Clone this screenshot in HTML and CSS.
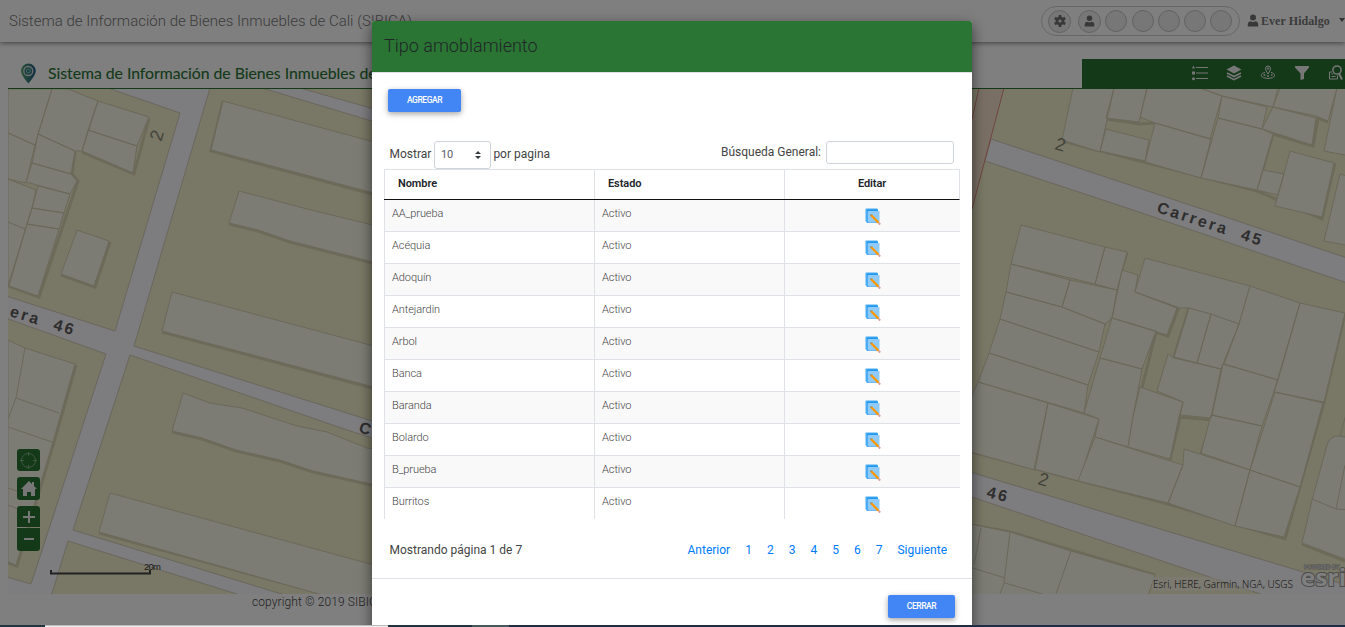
FILE: index.html
```html
<!DOCTYPE html>
<html lang="es">
<head>
<meta charset="utf-8">
<title>SIBICA</title>
<link rel="stylesheet" href="styles.css">
</head>
<body>
<svg class="defs" aria-hidden="true">
  <symbol id="edit" viewBox="0 0 16 17">
    <path d="M1 .500h11.500V15H2L.500 13V1z" fill="#4babf5"/><path d="M2.500 1.500H13V4H2.500z" fill="#2196f3"/><path d="M3 3h11.500v11.500H4L3 13.500z" fill="#90caf9"/>
    <path d="M6 7 13.500 14.800" stroke="#ff9800" stroke-width="2.300"/><path d="M5.500 6.500l1 1" stroke="#8b8d70" stroke-width="1.500"/><path d="M13.700 15 15.200 16.500" stroke="#d99b9b" stroke-width="2"/>
  </symbol>
  <symbol id="user" viewBox="0 0 12 12"><circle cx="6" cy="3" r="3"/><path d="M.8 12Q.3 7 3.3 6.7Q6 8.2 8.7 6.7Q11.7 7 11.2 12z"/></symbol>
</svg>

<div class="page">
  <header class="topbar">
    <div class="brand">Sistema de Información de Bienes Inmuebles de Cali (SIBICA)</div>
    <div class="account">
      <div class="pill">
        <span class="dot first"><svg width="12" height="12" viewBox="-6 -6 12 12"><circle r="3" fill="none" stroke="#717171" stroke-width="2.8"/><path d="M0-6V-3M0 3V6M-5.2-3-2.6-1.5M2.6 1.5 5.2 3M-5.2 3-2.6 1.5M2.6-1.5 5.2-3" stroke="#717171" stroke-width="2.7"/></svg></span>
        <span class="dot second"><svg width="11" height="12" fill="#717171"><use href="#user"/></svg></span>
        <span class="dot"></span><span class="dot"></span><span class="dot"></span><span class="dot"></span><span class="dot"></span>
      </div>
      <svg class="usericon" width="12" height="13" fill="#707070"><use href="#user"/></svg>
      <span class="username">Ever Hidalgo</span><span class="caret"></span>
    </div>
  </header>

  <section class="appbar">
    <svg class="pin" width="17" height="21" viewBox="0 0 17 21"><defs><linearGradient id="pg"><stop offset="0" stop-color="#55a66d"/><stop offset="1" stop-color="#205a8a"/></linearGradient></defs><path d="M8.3 20.5Q1 12 1 8a7.4 7.4 0 0 1 14.8 0Q15.800 12 8.300 20.500z" fill="url(#pg)"/><circle cx="8.300" cy="8" r="4.500" fill="#327f7e" stroke="#ddd" stroke-width="1.300"/><circle cx="8.300" cy="8" r="2" fill="none" stroke="#9cc"/></svg>
    <h1 class="apptitle">Sistema de Información de Bienes Inmuebles de Cali</h1>
    <nav class="tools">
      <svg width="16" height="16" viewBox="0 0 16 16"><path d="M4 2.500H16M4 8H16M4 13.500H16" stroke="#eee" stroke-width="1.200"/><path d="M0 3.500 1.500.500 3 3.500zM0 6.500h3v3H0z" fill="#eee"/><circle cx="1.500" cy="13.800" r="1.500" fill="#eee"/></svg>
      <svg width="16" height="16" viewBox="0 0 16 16"><path d="M8 .500 15.500 4.500 8 8.500.500 4.500z" fill="#eee"/><path d="M1 8 8 11.500 15 8M1 11 8 14.700 15 11" fill="none" stroke="#eee" stroke-width="1.600"/></svg>
      <svg width="16" height="16" viewBox="0 0 16 16" fill="none" stroke="#eee"><path d="M5 7.500C0 8 0 12.500 5 13Q8 14 11 13C16 12.500 15.500 8 11 7.500"/><path d="M8 9Q5.500 5.500 5.500 3.500a2.500 2.500 0 0 1 5 0Q10.500 5.500 8 9z"/><circle cx="8" cy="3.500" r=".8"/><path d="M3.500 10h2M7 11h2M11 10h1.500" stroke-width="1.300"/></svg>
      <svg width="16" height="16" viewBox="0 0 16 16"><path d="M1 1H15V2.500L10 8.500V14L6.500 15V8.500L1 2.500z" fill="#eee"/></svg>
      <svg width="16" height="16" viewBox="0 0 16 16" fill="none" stroke="#eee"><circle cx="9" cy="5" r="4.100" stroke-width="1.500"/><path d="M11 8.500 14 14.500" stroke-width="2"/><path d="M4 7H1.500V14H9.500V10.500M3.500 9H5M3.500 11.500H7.500"/></svg>
    </nav>
  </section>

  <main class="mapbox">
    <svg class="map" viewBox="8 89 1337 505" preserveAspectRatio="none">
      <rect x="8" y="89" width="1337" height="505" fill="#f3eecb"/>
      <g fill="#fbf9fc" stroke="#d3cdbb" stroke-width="1">
        <path d="M108 88 180 113 115 331 0 294V316L106 354 31 584 0 575V600H50L68 541 243 596H288L73 530 130 355 347 430 385 442V425L134 346 210 88zM262 88 385 125V112L300 88z"/>
        <path d="M991 139 1205 210 1350 259V284L1133 210 985 161z"/>
        <path d="M960 469 1350 586V600H1278L960 493z"/>
      </g>
      <path d="M979 88H1004L972 209V119z" fill="#f2dfcb"/><path d="M1004 88 972 209M979 88 972 119" stroke="#df897a" fill="none"/>
      <g class="shade">
        <path d="M149 118 134 174 82 152M75 152 72 174 78 181 39 297 8 286M110 242 95 287 61 275M76 365 54 442 17 566 8 563M223 101 211 151 372 194M229 224 258 231 290 242 372 263M162 332 372 388M172 432 202 439 236 451 280 461 313 472 372 485M99 533 327 595"/>
        <path d="M1062 141 1257 191 1322 219 1335 163M1106 119 1140 124 1155 123M1273 134 1257 190M1273 134 1313 146 1318 118 1328 122M1127 252 1122 270M1135 292 1178 309 1168 336 1156 332 1142 388M1189 308 1174 357M1345 313 1324 402 1285 539 1168 504 972 452M1179 417 1212 420 1201 454M1180 418 1170 460M1302 544 1345 561M972 525 1010 532 1155 575"/>
      </g>
      <g class="lots">
        <path d="M8 89H52L38 134 35 145 8 133zM52 89H68L98 101 82 151H75L38 134zM98 101 149 117 137 146 88 130zM88 130 137 146 133 173 82 151zM38 134 75 151 71 174 32 163zM8 133 35 145 26 183 8 179zM32 163 71 174 77 181 70 194 26 182zM38 186 70 194 64 213 32 208zM8 179 36 190 32 208 8 286zM32 208 64 213 59 229 27 224zM27 224 59 229 38 296 9 286zM8 222 25 229M77 230 109 241 94 286 61 274z"/>
        <path d="M8 340 25 348 75 364 53 442 16 565 8 562zM25 348 16 398 8 419M16 398 59 413M8 427 52 442M8 488 20 492M8 505 18 509M223 101 385 145V196L211 150zM239 191 311 210 385 228V265L290 241 258 230 229 223zM172 292 385 349V390L162 331zM183 393 210 403 242 408 297 426 327 432 367 448 385 450V487L313 471 280 460 236 450 202 438 172 431zM110 493 385 568V600H340L99 532z"/>
        <path d="M1073 88 1062 140 1100 152 1114 88zM1114 88H1147L1139 122 1106 118zM1147 88H1200L1222 96 1210 139 1155 123 1140 117zM1106 129 1149 140 1145 161 1100 151zM1155 123 1211 139 1201 178 1145 162zM1200 88H1280L1273 107 1222 96zM1222 96 1267 107 1262 129 1218 118zM1218 118 1262 129 1273 134 1257 190 1201 178zM1273 107 1316 118 1312 145 1262 129zM1278 88H1337L1328 121 1316 116 1273 107zM1263 170 1284 174 1278 195 1257 190zM1290 151 1334 163 1322 217 1275 206zM1337 88H1350V156L1324 151zM1340 174 1350 177V246L1324 241z"/>
        <path d="M1021 225 1105 247 1095 284 1011 264zM1105 247 1127 252 1117 290 1095 284zM1011 264 1070 280 1062 307 1006 292zM1070 280 1117 290 1112 318 1105 324 1062 307zM1006 292 1062 307 1105 324 1099 352 1000 319zM1000 319 1099 352 1088 385 989 353zM989 353 1088 385 1084 413 978 382zM978 382 1048 403 1035 470 960 449 972 395zM1048 403 1099 419 1079 481 1034 469zM1122 270 1138 275 1135 292 1177 308 1167 335 1112 318zM1145 258 1250 286 1239 324 1189 308H1180L1135 292zM1112 318 1156 331 1142 369 1100 358zM1100 358 1142 369 1133 417 1128 447 1095 437 1099 419 1084 413z"/>
        <path d="M1189 308 1211 314 1197 363 1174 357zM1211 314 1239 324 1221 369 1197 363zM1250 286 1300 303 1278 380 1224 364 1239 324zM1300 303 1345 313 1324 402 1274 392zM1168 354 1174 358 1221 369 1211 418 1180 415 1183 402 1157 391zM1223 364 1278 380 1262 426 1212 415zM1140 387 1183 402 1179 417 1170 459 1128 447 1133 417zM1095 437 1183 465 1168 503 1078 481zM1184 449 1250 470 1235 526 1168 503 1183 465zM1211 415 1262 426 1250 470 1201 453zM1275 392 1323 403 1300 487 1250 470zM1250 470 1300 487 1284 537 1235 526zM1340 436Q1330 435 1327 445L1312 500 1302 543 1350 561V438zM1312 499 1336 509 1350 510M1340 436 1350 400M1336 509 1345 465M960 522 1010 532 1071 551 1155 575 1148 596H960zM981 528 974 565M1010 532 1004 583 1000 594M960 564 1005 578M1005 583 1042 594M1071 551 1056 594"/>
      </g>
      <g class="street">
        <text transform="translate(9 316) rotate(17)">era&#160; 46</text>
        <text transform="translate(358 432) rotate(17)">Carrera</text>
        <text transform="translate(1156 212) rotate(18)">Carrera&#160; 45</text>
        <text transform="translate(986 497) rotate(14)">46</text>
        <text transform="translate(962 491) rotate(14)">a</text>
      </g>
      <g class="num"><text transform="translate(161 142) rotate(-72)">2</text><text transform="translate(1054 149) rotate(16)">2</text><text transform="translate(1037 484) rotate(16)">2</text></g>
      <path d="M51 570V573.500H150V570" fill="none" stroke="#444" stroke-width="2"/>
      <text x="144" y="570" class="scale" textLength="17">20m</text>
      <rect x="1152" y="577" width="143" height="14" fill="#fff" opacity=".4"/>
      <text x="1153" y="588" class="credit" textLength="140">Esri, HERE, Garmin, NGA, USGS</text>
      <text x="1304" y="569" class="powered" textLength="35">POWERED BY</text>
      <text x="1301" y="586" class="esri" textLength="45">esri</text>
    </svg>
    <div class="controls">
      <span class="ctl locate"><svg width="17" height="17" viewBox="0 0 17 17" fill="none" stroke="#7fae83"><circle cx="8.500" cy="8.500" r="7"/><path d="M8.500 0V4M8.500 13V17M0 8.500H4M13 8.500H17"/></svg></span>
      <span class="ctl home"><svg width="16" height="15" viewBox="0 0 16 15"><path d="M0 8 8 0 11 3V1H13V5L16 8H14V15H10V11H6V15H2V8z" fill="#eee"/></svg></span>
      <span class="ctl plus"><svg width="12" height="12"><path d="M0 6H12M6 0V12" stroke="#eee" stroke-width="2"/></svg></span>
      <span class="ctl minus"><svg width="10" height="12"><path d="M0 5H10" stroke="#eee" stroke-width="2"/></svg></span>
    </div>
  </main>
  <footer class="copy">copyright © 2019 SIBICA</footer>
</div>

<div class="backdrop">
  <div class="modal">
    <div class="modal-head">Tipo amoblamiento</div>
    <div class="modal-body">
      <button class="btn add">AGREGAR</button>
      <div class="filters">
        <span>Mostrar</span>
        <span class="select">10<svg width="6" height="8"><path d="M0 3 3 0 6 3zM0 5 3 8 6 5z" fill="#343a40"/></svg></span>
        <span>por pagina</span>
        <span class="search-label">Búsqueda General:</span><input class="search">
      </div>
      <div class="grid">
        <div class="row head"><b>Nombre</b><b>Estado</b><b>Editar</b></div>
        <div class="row"><span>AA_prueba</span><span>Activo</span><span><svg><use href="#edit"/></svg></span></div>
        <div class="row"><span>Acéquia</span><span>Activo</span><span><svg><use href="#edit"/></svg></span></div>
        <div class="row"><span>Adoquín</span><span>Activo</span><span><svg><use href="#edit"/></svg></span></div>
        <div class="row"><span>Antejardin</span><span>Activo</span><span><svg><use href="#edit"/></svg></span></div>
        <div class="row"><span>Arbol</span><span>Activo</span><span><svg><use href="#edit"/></svg></span></div>
        <div class="row"><span>Banca</span><span>Activo</span><span><svg><use href="#edit"/></svg></span></div>
        <div class="row"><span>Baranda</span><span>Activo</span><span><svg><use href="#edit"/></svg></span></div>
        <div class="row"><span>Bolardo</span><span>Activo</span><span><svg><use href="#edit"/></svg></span></div>
        <div class="row"><span>B_prueba</span><span>Activo</span><span><svg><use href="#edit"/></svg></span></div>
        <div class="row"><span>Burritos</span><span>Activo</span><span><svg><use href="#edit"/></svg></span></div>
      </div>
      <div class="pager">
        <span class="info">Mostrando página 1 de 7</span>
        <a>Anterior</a><a>1</a><a>2</a><a>3</a><a>4</a><a>5</a><a>6</a><a>7</a><a>Siguiente</a>
      </div>
    </div>
    <div class="modal-foot"><button class="btn close">CERRAR</button></div>
  </div>
</div>
<div class="taskbar"><i class="start"></i><i class="field"></i><i class="gap"></i><i class="task"></i></div>
</body>
</html>
```
FILE: styles.css
```css
* { box-sizing: border-box; }
body { margin: 0; width: 1345px; height: 627px; overflow: hidden; position: relative; background: #fff; font-family: Roboto, sans-serif; }
.defs { position: absolute; width: 0; height: 0; }
.page { height: 627px; display: flex; flex-direction: column; overflow: hidden; }

.topbar { height: 42px; flex: none; display: flex; justify-content: space-between; box-shadow: 0 1px 5px rgba(0,0,0,.5); background: #fff; position: relative; }
.brand { padding-left: 9px; line-height: 42px; font-size: 15px; font-weight: 300; color: #777; white-space: nowrap; }
.account { display: flex; align-items: flex-start; width: 304px; flex: none; }
.pill { display: flex; flex: none; align-items: center; gap: 4.200px; width: 199px; height: 30px; margin-top: 6px; padding-left: 6px; border: 1px solid #cfcfcf; border-radius: 15px; }
.dot { width: 22px; height: 22px; flex: none; border: 1px solid #c4c4c4; border-radius: 50%; background: #eee; display: flex; align-items: center; justify-content: center; }
.dot.first { margin-right: 3px; }
.dot.first, .dot.second { width: 23px; height: 23px; }
.usericon { margin: 14px 0 0 7px; flex: none; }
.username { font: bold 12px/42px "Liberation Serif", serif; color: #777; margin-left: 2px; white-space: nowrap; letter-spacing: .06px; }
.caret { margin: 18px 0 0 9px; border: 3.500px solid transparent; border-top: 4px solid #666; flex: none; }

.appbar { height: 47px; flex: none; margin-left: 8px; border-bottom: 1px solid #277333; display: flex; align-items: flex-start; }
.pin { margin: 21px 11px 0 12px; flex: none; }
.apptitle { margin: 0; padding-top: 21px; width: 1034px; font: 400 15.800px/20px Lato, sans-serif; color: #277333; -webkit-text-stroke: .1px #277333; white-space: nowrap; letter-spacing: -.03px; }
.tools { margin-top: 17px; height: 29px; width: 263px; flex: none; padding: 6px 0 0 110px; background: #277333; display: flex; gap: 18px; }
.tools svg { flex: none; }

.mapbox { height: 505px; flex: none; margin-left: 8px; display: grid; }
.map, .controls { grid-area: 1 / 1; }
.map { width: 1337px; height: 505px; }
.shade { fill: none; stroke: #dad5b5; stroke-width: 3; }
.lots { fill: #f8f8e8; stroke: #d6d1b4; stroke-width: 1; }
.street { font: bold 16px "Liberation Sans", sans-serif; fill: #5c5c5c; letter-spacing: 2.500px; }
.num { font: 18px "Liberation Sans", sans-serif; fill: #888877; }
.scale { font: 9.500px "Liberation Sans", sans-serif; fill: #333; }
.credit { font: 300 10px "Open Sans", sans-serif; fill: #111; }
.powered { font: 5.500px "Open Sans", sans-serif; fill: #fff; stroke: #999; stroke-width: 1px; paint-order: stroke; }
.esri { font: bold 24px "Open Sans", sans-serif; fill: #fff; stroke: #999; stroke-width: 2px; paint-order: stroke; }
.controls { padding: 360px 0 0 9px; display: flex; flex-direction: column; position: relative; }
.ctl { width: 23px; height: 22px; border-radius: 3px; background: #277333; display: flex; align-items: center; justify-content: center; }
.home { height: 23px; margin: 6px 0; }
.plus { height: 21px; border-radius: 3px 3px 0 0; }
.minus { height: 23px; margin-top: 1px; border-radius: 0 0 3px 3px; }
.copy { padding-left: 252px; font-size: 12px; line-height: 16px; font-weight: 300; color: #444; letter-spacing: .1px; }

.backdrop { position: absolute; inset: 0; background: rgba(0,0,0,.5); padding: 21px 0 0 372px; }
.modal { width: 600px; height: 620px; background: #fff; border-radius: 2px; box-shadow: 0 5px 11px rgba(0,0,0,.3), 0 4px 15px rgba(0,0,0,.3); }
.modal-head { height: 52px; padding-left: 12px; line-height: 50px; font-size: 18px; font-weight: 300; color: #212529; background: #2a7533; border-bottom: 1px solid #dee2e6; border-radius: 2px 2px 0 0; background-clip: padding-box; }
.modal-body { height: 505px; padding: 16px 12px 0; }
.btn { display: block; border: 0; padding: 0; height: 23px; border-radius: 2px; background: #4285f4; color: #fff; font: 500 8.500px/23px Roboto, sans-serif; letter-spacing: -.450px; box-shadow: 0 2px 5px rgba(0,0,0,.26), 0 2px 8px rgba(0,0,0,.12); }
.add { width: 73px; margin-left: 4px; }
.filters { height: 28px; margin-top: 29px; padding-left: 5.500px; display: flex; font-size: 12px; line-height: 26px; color: #444; white-space: nowrap; }
.select { width: 57px; height: 28px; margin: 0 2.500px; padding: 0 9px 0 6px; border: 1px solid #ced4da; border-radius: 3px; font-size: 11px; font-weight: 400; color: #5a6066; display: flex; align-items: center; justify-content: space-between; }
.search-label { margin-left: auto; line-height: 23px; }
.search { width: 128px; height: 23px; margin: 0 6px 0 5px; padding: 0; border: 1px solid #ced4da; border-radius: 3px; }
.grid { width: 576px; height: 350px; overflow: hidden; }
.row { display: grid; grid-template-columns: 210px 190px 176px; height: 32px; border-bottom: 1px solid #dee2e6; font-size: 11px; font-weight: 300; color: #444; letter-spacing: -.08px; }
.row > * { border-left: 1px solid #dee2e6; padding-left: 7px; line-height: 27px; }
.row:nth-child(even) { background: #f9f9f9; }
.row > :last-child { padding: 8px 0 0 1px; display: flex; justify-content: center; }
.row svg { width: 16px; height: 17px; }
.head { height: 31px; border-top: 1px solid #dee2e6; border-bottom-color: #111; color: #212529; border-right: 1px solid #dee2e6; }
.head b { font-weight: 600; padding-left: 13px; }
.row.head b:last-child { padding: 0 1px 0 0; line-height: 27px; }
.pager { display: flex; align-items: center; margin-top: 21px; height: 20px; padding: 0 13px 0 5.500px; gap: 15px; font-size: 12px; white-space: nowrap; color: #007bff; }
.info { color: #444; margin-right: auto; }
.modal-foot { border-top: 1px solid #dee2e6; padding: 16px 17px 0 0; display: flex; justify-content: flex-end; }
.close { width: 67px; }

.taskbar { position: absolute; left: 0; right: 0; bottom: 0; height: 2px; background: #1b2d47; display: flex; }
.start { width: 45px; background: #203742; }
.field { width: 343px; background: #eee; border-top: 1px solid #bbb; }
.gap { width: 84px; background: #1f3443; }
.task { width: 37px; background: #45585f; }
```
